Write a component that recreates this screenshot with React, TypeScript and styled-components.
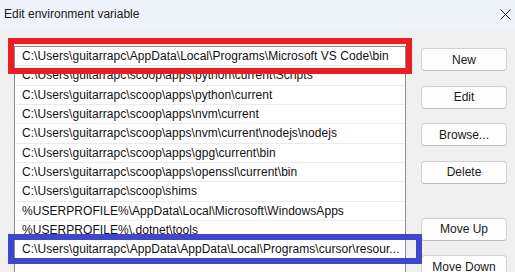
import React from 'react';
import styled, { createGlobalStyle } from 'styled-components';

const GlobalStyle = createGlobalStyle`
  html, body {
    margin: 0;
    padding: 0;
    background: #f0f0f0;
  }
  * {
    box-sizing: border-box;
  }
`;

const paths: string[] = [
  'C:\\Users\\guitarrapc\\AppData\\Local\\Programs\\Microsoft VS Code\\bin',
  'C:\\Users\\guitarrapc\\scoop\\apps\\python\\current\\Scripts',
  'C:\\Users\\guitarrapc\\scoop\\apps\\python\\current',
  'C:\\Users\\guitarrapc\\scoop\\apps\\nvm\\current',
  'C:\\Users\\guitarrapc\\scoop\\apps\\nvm\\current\\nodejs\\nodejs',
  'C:\\Users\\guitarrapc\\scoop\\apps\\gpg\\current\\bin',
  'C:\\Users\\guitarrapc\\scoop\\apps\\openssl\\current\\bin',
  'C:\\Users\\guitarrapc\\scoop\\shims',
  '%USERPROFILE%\\AppData\\Local\\Microsoft\\WindowsApps',
  '%USERPROFILE%\\.dotnet\\tools',
  'C:\\Users\\guitarrapc\\AppData\\AppData\\Local\\Programs\\cursor\\resour...',
];

const buttons = [
  { label: 'New', gap: 0 },
  { label: 'Edit', gap: 0 },
  { label: 'Browse...', gap: 0 },
  { label: 'Delete', gap: 0 },
  { label: 'Move Up', gap: 19.5 },
  { label: 'Move Down', gap: 0 },
];

const Window = styled.div`
  position: relative;
  width: 515px;
  height: 272px;
  overflow: hidden;
  background: #f0f0f0;
  font-family: 'Liberation Sans', Arial, sans-serif;
  font-size: 12px;
  color: #000;
`;

const TitleBar = styled.div`
  height: 30px;
  display: flex;
  align-items: center;
  justify-content: space-between;
  padding: 0 4px 2px 4px;
  background: #eef3f9;
`;

const Title = styled.span`
  font-size: 12px;
  color: #1a1a1a;
`;

const CloseIcon = styled.svg`
  width: 11px;
  height: 11px;
`;

const Body = styled.div`
  display: flex;
  gap: 15px;
  padding: 16px 0 0 14px;
`;

const PathList = styled.div`
  width: 392px;
  height: 240px;
  background: #fff;
  border: 1px solid #8c8c8c;
  border-bottom: none;
`;

const Row = styled.div`
  height: 19.33px;
  padding-left: 7px;
  display: flex;
  align-items: center;
  white-space: nowrap;
  overflow: hidden;
  letter-spacing: 0.05px;
  color: #111;
  border-bottom: 1px solid #ebebeb;
`;

const ButtonColumn = styled.div`
  display: flex;
  flex-direction: column;
  gap: 14.5px;
  padding-top: 2px;
`;

const Button = styled.div<{ $gap: number }>`
  width: 86px;
  height: 23px;
  margin-top: ${(p) => p.$gap}px;
  display: flex;
  align-items: center;
  justify-content: center;
  background: #fdfdfd;
  border: 1px solid #d0d0d0;
  border-bottom-color: #bcbcbc;
  border-radius: 4px;
  color: #1a1a1a;
`;

const Highlight = styled.div<{ $color: string; $x: number; $y: number; $w: number; $h: number }>`
  position: absolute;
  left: ${(p) => p.$x}px;
  top: ${(p) => p.$y}px;
  width: ${(p) => p.$w}px;
  height: ${(p) => p.$h}px;
  border: 6px solid ${(p) => p.$color};
  pointer-events: none;
`;

export default function App() {
  return (
    <>
      <GlobalStyle />
      <Window>
        <TitleBar>
          <Title>Edit environment variable</Title>
          <CloseIcon viewBox="0 0 11 11">
            <path d="M0.5 0.5 L10.5 10.5 M10.5 0.5 L0.5 10.5" stroke="#1a1a1a" strokeWidth="1" fill="none" />
          </CloseIcon>
        </TitleBar>
        <Body>
          <PathList>
            {paths.map((p) => (
              <Row key={p}>{p}</Row>
            ))}
          </PathList>
          <ButtonColumn>
            {buttons.map((b) => (
              <Button key={b.label} $gap={b.gap}>
                {b.label}
              </Button>
            ))}
          </ButtonColumn>
        </Body>
        <Highlight $color="#ed1c24" $x={8} $y={38} $w={404} $h={36} />
        <Highlight $color="#3f48cc" $x={8} $y={234} $w={414} $h={30} />
      </Window>
    </>
  );
}
